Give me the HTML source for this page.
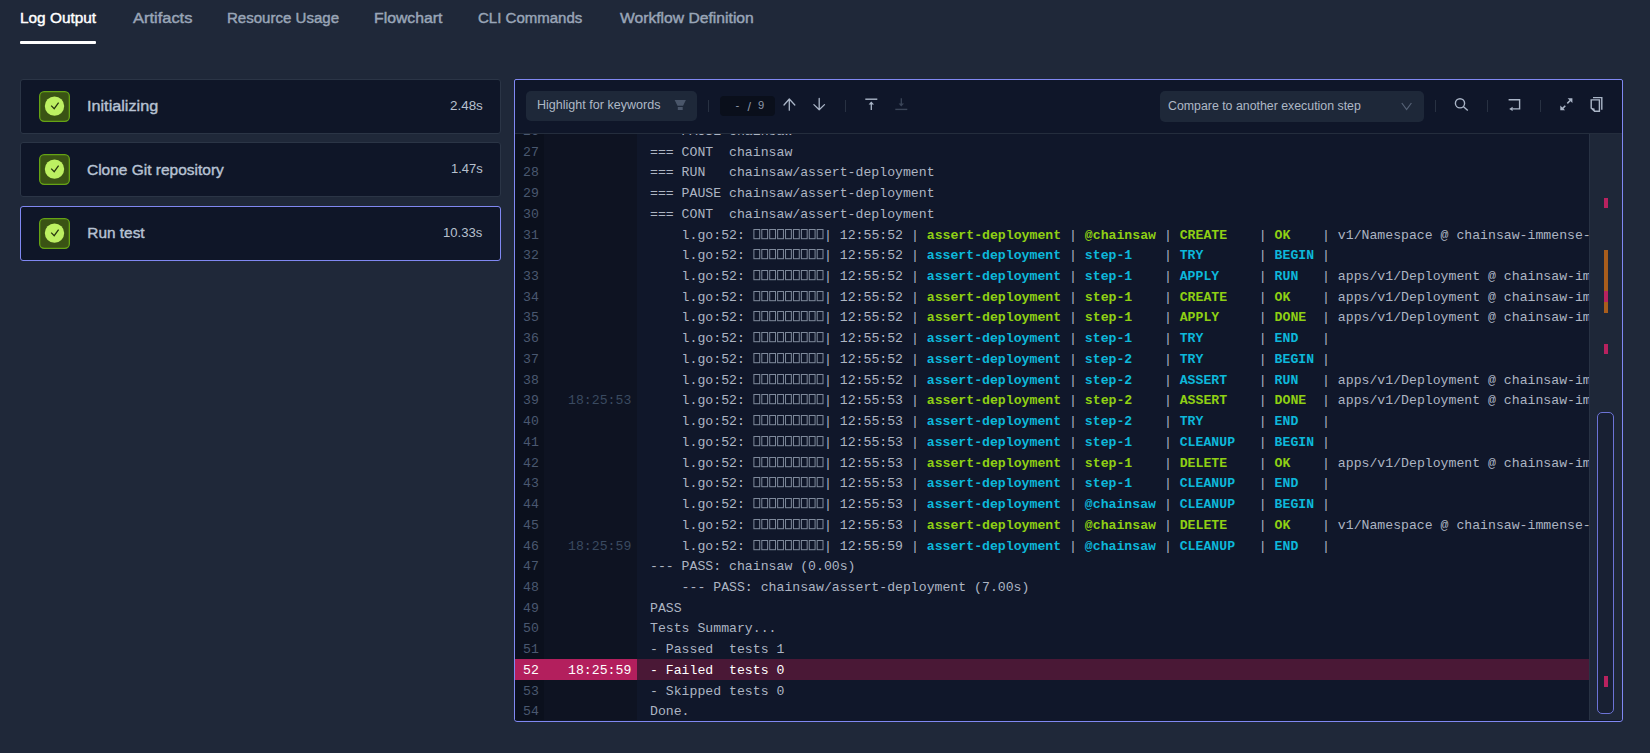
<!DOCTYPE html><html><head><meta charset="utf-8"><style>
*{box-sizing:border-box}
html,body{margin:0;padding:0}
body{width:1650px;height:753px;background:#1f2839;position:relative;overflow:hidden;font-family:"Liberation Sans",sans-serif}
.abs{position:absolute}
.card{position:absolute;left:20px;width:481px;height:55px;background:#0f1628;border:1px solid #2b3546;border-radius:3px}
.card.sel{border-color:#8088f2}
.card svg{position:absolute;left:18px;top:11px}
.panel{position:absolute;left:514px;top:79px;width:1109px;height:643px;border:1px solid #8088f2;border-radius:2px 2px 3px 3px;background:#0f1629;overflow:hidden}
.rows{position:absolute;left:515px;top:134px;width:1074px;height:586px;overflow:hidden;background:#10172a}
.colln{position:absolute;left:0;top:0;width:29px;height:100%;background:#0b101d}
.colts{position:absolute;left:29px;top:0;width:93px;height:100%;background:#0e1322}
.ln{position:absolute;left:0;width:23.9px;text-align:right;font-family:"Liberation Mono",monospace;font-size:13.185px;line-height:15px;color:#4a5870}
.ts{position:absolute;left:29px;width:87.3px;text-align:right;font-family:"Liberation Mono",monospace;font-size:13.185px;line-height:15px;color:#3a4a60}
.tx{position:absolute;left:135px;font-family:"Liberation Mono",monospace;font-size:13.185px;line-height:15px;color:#adb5c3;white-space:pre}
.g{color:#8fd014;font-weight:bold}
.c{color:#0db8da;font-weight:bold}
.tofu{display:inline-block;width:71.208px;height:10px;vertical-align:-1px;position:relative}
.hl .ln,.hl .ts,.hl .tx,.ln.hl,.ts.hl,.tx.hl{color:#ffffff}
.strip{position:absolute;left:1589px;top:134px;width:33px;height:586px;background:#1e2738;border-left:1px solid #283244}
</style></head><body>
<div class="abs" style="left:20px;top:41px;width:76px;height:3px;background:#ffffff;border-radius:1px"></div>
<div class="card" style="top:79px"><svg width="33" height="33" viewBox="0 0 33 33"><rect x="0.65" y="0.65" width="29.7" height="29.7" rx="4.5" fill="#3a5314" stroke="#65a314" stroke-width="1.3"/><circle cx="15.5" cy="15.1" r="9.7" fill="#bdf062"/><path d="M12.2 14.6 L15.2 17.7 L19.6 11.7" fill="none" stroke="#28360f" stroke-width="1.25"/></svg></div>
<div class="card" style="top:142px"><svg width="33" height="33" viewBox="0 0 33 33"><rect x="0.65" y="0.65" width="29.7" height="29.7" rx="4.5" fill="#3a5314" stroke="#65a314" stroke-width="1.3"/><circle cx="15.5" cy="15.1" r="9.7" fill="#bdf062"/><path d="M12.2 14.6 L15.2 17.7 L19.6 11.7" fill="none" stroke="#28360f" stroke-width="1.25"/></svg></div>
<div class="card sel" style="top:206px"><svg width="33" height="33" viewBox="0 0 33 33"><rect x="0.65" y="0.65" width="29.7" height="29.7" rx="4.5" fill="#3a5314" stroke="#65a314" stroke-width="1.3"/><circle cx="15.5" cy="15.1" r="9.7" fill="#bdf062"/><path d="M12.2 14.6 L15.2 17.7 L19.6 11.7" fill="none" stroke="#28360f" stroke-width="1.25"/></svg></div>
<div class="panel"></div>
<div class="abs" style="left:515px;top:133px;width:1107px;height:1px;background:#242d3d"></div>
<div class="abs" style="left:526px;top:91px;width:171px;height:30px;background:#1e2839;border-radius:5px"></div>
<div class="abs" style="left:1160px;top:91px;width:264px;height:31px;background:#1e2839;border-radius:5px"></div>
<div class="abs" style="left:720px;top:96px;width:55px;height:19.5px;background:#0a0f1b;border-radius:4px"></div>
<div class="abs" style="left:708.2px;top:100px;width:1px;height:12px;background:#283142"></div>
<div class="abs" style="left:845.1px;top:100px;width:1px;height:12px;background:#283142"></div>
<div class="abs" style="left:1435.2px;top:100px;width:1px;height:12px;background:#283142"></div>
<div class="abs" style="left:1487.1px;top:100px;width:1px;height:12px;background:#283142"></div>
<div class="abs" style="left:1540.0px;top:100px;width:1px;height:12px;background:#283142"></div>
<svg class="abs" style="left:0;top:0" width="1650" height="140" viewBox="0 0 1650 140"><path d="M674.6 100.1 H685.9 L683.1 105.8 H677.5 Z M677.8 107 H682.7 V110 H677.8 Z" fill="#4a566a"/><g fill="none" stroke="#aab5c7" stroke-width="1.3" stroke-linecap="round" stroke-linejoin="round"><path d="M789.3 99.2 V110.2 M784 105 L789.3 99 L794.8 105"/><path d="M819.2 98.5 V109.8 M813.9 104.6 L819.2 109.8 L824.5 104.6"/></g><path d="M865.3 99.2 H877.3" stroke="#aab5c7" stroke-width="1.4"/><path d="M871.3 110 V102.5" stroke="#aab5c7" stroke-width="1.3"/><path d="M868.6 104.6 L871.3 101.6 L874 104.6 Z" fill="#aab5c7"/><path d="M895.3 109.4 H907.3" stroke="#3b4558" stroke-width="1.4"/><path d="M901.3 98.2 V105.5" stroke="#3b4558" stroke-width="1.3"/><path d="M898.6 103.6 L901.3 106.6 L904 103.6 Z" fill="#3b4558"/><path d="M1401.8 103 L1406.6 109.6 L1411.4 103" fill="none" stroke="#566276" stroke-width="1.2"/><g fill="none" stroke="#aab5c7" stroke-width="1.4"><circle cx="1460" cy="103.3" r="4.6"/><path d="M1463.3 106.6 L1467.8 110.6"/></g><path d="M1508.6 99.8 H1519.6 V108.9 H1512.3" fill="none" stroke="#aab5c7" stroke-width="1.4"/><path d="M1509.2 108.9 L1512.6 106.7 V111.1 Z" fill="#aab5c7"/><path d="M1565.3 105.8 L1562.5 108.6 M1567.3 103.4 L1570.2 100.5" stroke="#aab5c7" stroke-width="1.5"/><path d="M1567.6 98.3 H1572.4 V103.1 Z M1560.3 105.4 V110.2 H1565.1 Z" fill="#aab5c7"/><g fill="none" stroke="#aab5c7" stroke-width="1.4"><path d="M1593 97.6 H1601.8 V109.7"/><path d="M1591.2 108 V99.9 H1599.4 V111.2 H1594.6 Z"/></g><path d="M1590.5 108 L1594.5 108.4 L1594.8 111.9 Z" fill="#aab5c7"/></svg>
<div class="rows"><div class="colln"></div><div class="colts"></div>
<div class="abs" style="left:0;top:525px;width:1074px;height:21px;background:#4a1836"></div>
<div class="abs" style="left:0;top:525px;width:122px;height:21px;background:#b31f5d"></div>
<span class="ln" style="top:-10px">26</span>
<span class="tx" style="top:-10px">=== PAUSE chainsaw</span>
<span class="ln" style="top:11px">27</span>
<span class="tx" style="top:11px">=== CONT  chainsaw</span>
<span class="ln" style="top:31px">28</span>
<span class="tx" style="top:31px">=== RUN   chainsaw/assert-deployment</span>
<span class="ln" style="top:52px">29</span>
<span class="tx" style="top:52px">=== PAUSE chainsaw/assert-deployment</span>
<span class="ln" style="top:73px">30</span>
<span class="tx" style="top:73px">=== CONT  chainsaw/assert-deployment</span>
<span class="ln" style="top:94px">31</span>
<span class="tx" style="top:94px">    l.go:52: <span class="tofu"><svg width="72" height="11" style="position:absolute;left:0;top:-1px"><rect x="0.90" y="0.5" width="5.8" height="9.2" fill="none" stroke="#7f8a9c" stroke-width="1"/><rect x="8.81" y="0.5" width="5.8" height="9.2" fill="none" stroke="#7f8a9c" stroke-width="1"/><rect x="16.72" y="0.5" width="5.8" height="9.2" fill="none" stroke="#7f8a9c" stroke-width="1"/><rect x="24.64" y="0.5" width="5.8" height="9.2" fill="none" stroke="#7f8a9c" stroke-width="1"/><rect x="32.55" y="0.5" width="5.8" height="9.2" fill="none" stroke="#7f8a9c" stroke-width="1"/><rect x="40.46" y="0.5" width="5.8" height="9.2" fill="none" stroke="#7f8a9c" stroke-width="1"/><rect x="48.37" y="0.5" width="5.8" height="9.2" fill="none" stroke="#7f8a9c" stroke-width="1"/><rect x="56.28" y="0.5" width="5.8" height="9.2" fill="none" stroke="#7f8a9c" stroke-width="1"/><rect x="64.20" y="0.5" width="5.8" height="9.2" fill="none" stroke="#7f8a9c" stroke-width="1"/></svg></span>| 12:55:52 | <span class="g">assert-deployment</span> | <span class="g">@chainsaw</span> | <span class="g">CREATE</span>    | <span class="g">OK</span>    | v1/Namespace @ chainsaw-immense-goblin</span>
<span class="ln" style="top:114px">32</span>
<span class="tx" style="top:114px">    l.go:52: <span class="tofu"><svg width="72" height="11" style="position:absolute;left:0;top:-1px"><rect x="0.90" y="0.5" width="5.8" height="9.2" fill="none" stroke="#7f8a9c" stroke-width="1"/><rect x="8.81" y="0.5" width="5.8" height="9.2" fill="none" stroke="#7f8a9c" stroke-width="1"/><rect x="16.72" y="0.5" width="5.8" height="9.2" fill="none" stroke="#7f8a9c" stroke-width="1"/><rect x="24.64" y="0.5" width="5.8" height="9.2" fill="none" stroke="#7f8a9c" stroke-width="1"/><rect x="32.55" y="0.5" width="5.8" height="9.2" fill="none" stroke="#7f8a9c" stroke-width="1"/><rect x="40.46" y="0.5" width="5.8" height="9.2" fill="none" stroke="#7f8a9c" stroke-width="1"/><rect x="48.37" y="0.5" width="5.8" height="9.2" fill="none" stroke="#7f8a9c" stroke-width="1"/><rect x="56.28" y="0.5" width="5.8" height="9.2" fill="none" stroke="#7f8a9c" stroke-width="1"/><rect x="64.20" y="0.5" width="5.8" height="9.2" fill="none" stroke="#7f8a9c" stroke-width="1"/></svg></span>| 12:55:52 | <span class="c">assert-deployment</span> | <span class="c">step-1</span>    | <span class="c">TRY</span>       | <span class="c">BEGIN</span> |</span>
<span class="ln" style="top:135px">33</span>
<span class="tx" style="top:135px">    l.go:52: <span class="tofu"><svg width="72" height="11" style="position:absolute;left:0;top:-1px"><rect x="0.90" y="0.5" width="5.8" height="9.2" fill="none" stroke="#7f8a9c" stroke-width="1"/><rect x="8.81" y="0.5" width="5.8" height="9.2" fill="none" stroke="#7f8a9c" stroke-width="1"/><rect x="16.72" y="0.5" width="5.8" height="9.2" fill="none" stroke="#7f8a9c" stroke-width="1"/><rect x="24.64" y="0.5" width="5.8" height="9.2" fill="none" stroke="#7f8a9c" stroke-width="1"/><rect x="32.55" y="0.5" width="5.8" height="9.2" fill="none" stroke="#7f8a9c" stroke-width="1"/><rect x="40.46" y="0.5" width="5.8" height="9.2" fill="none" stroke="#7f8a9c" stroke-width="1"/><rect x="48.37" y="0.5" width="5.8" height="9.2" fill="none" stroke="#7f8a9c" stroke-width="1"/><rect x="56.28" y="0.5" width="5.8" height="9.2" fill="none" stroke="#7f8a9c" stroke-width="1"/><rect x="64.20" y="0.5" width="5.8" height="9.2" fill="none" stroke="#7f8a9c" stroke-width="1"/></svg></span>| 12:55:52 | <span class="c">assert-deployment</span> | <span class="c">step-1</span>    | <span class="c">APPLY</span>     | <span class="c">RUN</span>   | apps/v1/Deployment @ chainsaw-immense-goblin/coredns</span>
<span class="ln" style="top:156px">34</span>
<span class="tx" style="top:156px">    l.go:52: <span class="tofu"><svg width="72" height="11" style="position:absolute;left:0;top:-1px"><rect x="0.90" y="0.5" width="5.8" height="9.2" fill="none" stroke="#7f8a9c" stroke-width="1"/><rect x="8.81" y="0.5" width="5.8" height="9.2" fill="none" stroke="#7f8a9c" stroke-width="1"/><rect x="16.72" y="0.5" width="5.8" height="9.2" fill="none" stroke="#7f8a9c" stroke-width="1"/><rect x="24.64" y="0.5" width="5.8" height="9.2" fill="none" stroke="#7f8a9c" stroke-width="1"/><rect x="32.55" y="0.5" width="5.8" height="9.2" fill="none" stroke="#7f8a9c" stroke-width="1"/><rect x="40.46" y="0.5" width="5.8" height="9.2" fill="none" stroke="#7f8a9c" stroke-width="1"/><rect x="48.37" y="0.5" width="5.8" height="9.2" fill="none" stroke="#7f8a9c" stroke-width="1"/><rect x="56.28" y="0.5" width="5.8" height="9.2" fill="none" stroke="#7f8a9c" stroke-width="1"/><rect x="64.20" y="0.5" width="5.8" height="9.2" fill="none" stroke="#7f8a9c" stroke-width="1"/></svg></span>| 12:55:52 | <span class="g">assert-deployment</span> | <span class="g">step-1</span>    | <span class="g">CREATE</span>    | <span class="g">OK</span>    | apps/v1/Deployment @ chainsaw-immense-goblin/coredns</span>
<span class="ln" style="top:176px">35</span>
<span class="tx" style="top:176px">    l.go:52: <span class="tofu"><svg width="72" height="11" style="position:absolute;left:0;top:-1px"><rect x="0.90" y="0.5" width="5.8" height="9.2" fill="none" stroke="#7f8a9c" stroke-width="1"/><rect x="8.81" y="0.5" width="5.8" height="9.2" fill="none" stroke="#7f8a9c" stroke-width="1"/><rect x="16.72" y="0.5" width="5.8" height="9.2" fill="none" stroke="#7f8a9c" stroke-width="1"/><rect x="24.64" y="0.5" width="5.8" height="9.2" fill="none" stroke="#7f8a9c" stroke-width="1"/><rect x="32.55" y="0.5" width="5.8" height="9.2" fill="none" stroke="#7f8a9c" stroke-width="1"/><rect x="40.46" y="0.5" width="5.8" height="9.2" fill="none" stroke="#7f8a9c" stroke-width="1"/><rect x="48.37" y="0.5" width="5.8" height="9.2" fill="none" stroke="#7f8a9c" stroke-width="1"/><rect x="56.28" y="0.5" width="5.8" height="9.2" fill="none" stroke="#7f8a9c" stroke-width="1"/><rect x="64.20" y="0.5" width="5.8" height="9.2" fill="none" stroke="#7f8a9c" stroke-width="1"/></svg></span>| 12:55:52 | <span class="g">assert-deployment</span> | <span class="g">step-1</span>    | <span class="g">APPLY</span>     | <span class="g">DONE</span>  | apps/v1/Deployment @ chainsaw-immense-goblin/coredns</span>
<span class="ln" style="top:197px">36</span>
<span class="tx" style="top:197px">    l.go:52: <span class="tofu"><svg width="72" height="11" style="position:absolute;left:0;top:-1px"><rect x="0.90" y="0.5" width="5.8" height="9.2" fill="none" stroke="#7f8a9c" stroke-width="1"/><rect x="8.81" y="0.5" width="5.8" height="9.2" fill="none" stroke="#7f8a9c" stroke-width="1"/><rect x="16.72" y="0.5" width="5.8" height="9.2" fill="none" stroke="#7f8a9c" stroke-width="1"/><rect x="24.64" y="0.5" width="5.8" height="9.2" fill="none" stroke="#7f8a9c" stroke-width="1"/><rect x="32.55" y="0.5" width="5.8" height="9.2" fill="none" stroke="#7f8a9c" stroke-width="1"/><rect x="40.46" y="0.5" width="5.8" height="9.2" fill="none" stroke="#7f8a9c" stroke-width="1"/><rect x="48.37" y="0.5" width="5.8" height="9.2" fill="none" stroke="#7f8a9c" stroke-width="1"/><rect x="56.28" y="0.5" width="5.8" height="9.2" fill="none" stroke="#7f8a9c" stroke-width="1"/><rect x="64.20" y="0.5" width="5.8" height="9.2" fill="none" stroke="#7f8a9c" stroke-width="1"/></svg></span>| 12:55:52 | <span class="c">assert-deployment</span> | <span class="c">step-1</span>    | <span class="c">TRY</span>       | <span class="c">END</span>   |</span>
<span class="ln" style="top:218px">37</span>
<span class="tx" style="top:218px">    l.go:52: <span class="tofu"><svg width="72" height="11" style="position:absolute;left:0;top:-1px"><rect x="0.90" y="0.5" width="5.8" height="9.2" fill="none" stroke="#7f8a9c" stroke-width="1"/><rect x="8.81" y="0.5" width="5.8" height="9.2" fill="none" stroke="#7f8a9c" stroke-width="1"/><rect x="16.72" y="0.5" width="5.8" height="9.2" fill="none" stroke="#7f8a9c" stroke-width="1"/><rect x="24.64" y="0.5" width="5.8" height="9.2" fill="none" stroke="#7f8a9c" stroke-width="1"/><rect x="32.55" y="0.5" width="5.8" height="9.2" fill="none" stroke="#7f8a9c" stroke-width="1"/><rect x="40.46" y="0.5" width="5.8" height="9.2" fill="none" stroke="#7f8a9c" stroke-width="1"/><rect x="48.37" y="0.5" width="5.8" height="9.2" fill="none" stroke="#7f8a9c" stroke-width="1"/><rect x="56.28" y="0.5" width="5.8" height="9.2" fill="none" stroke="#7f8a9c" stroke-width="1"/><rect x="64.20" y="0.5" width="5.8" height="9.2" fill="none" stroke="#7f8a9c" stroke-width="1"/></svg></span>| 12:55:52 | <span class="c">assert-deployment</span> | <span class="c">step-2</span>    | <span class="c">TRY</span>       | <span class="c">BEGIN</span> |</span>
<span class="ln" style="top:239px">38</span>
<span class="tx" style="top:239px">    l.go:52: <span class="tofu"><svg width="72" height="11" style="position:absolute;left:0;top:-1px"><rect x="0.90" y="0.5" width="5.8" height="9.2" fill="none" stroke="#7f8a9c" stroke-width="1"/><rect x="8.81" y="0.5" width="5.8" height="9.2" fill="none" stroke="#7f8a9c" stroke-width="1"/><rect x="16.72" y="0.5" width="5.8" height="9.2" fill="none" stroke="#7f8a9c" stroke-width="1"/><rect x="24.64" y="0.5" width="5.8" height="9.2" fill="none" stroke="#7f8a9c" stroke-width="1"/><rect x="32.55" y="0.5" width="5.8" height="9.2" fill="none" stroke="#7f8a9c" stroke-width="1"/><rect x="40.46" y="0.5" width="5.8" height="9.2" fill="none" stroke="#7f8a9c" stroke-width="1"/><rect x="48.37" y="0.5" width="5.8" height="9.2" fill="none" stroke="#7f8a9c" stroke-width="1"/><rect x="56.28" y="0.5" width="5.8" height="9.2" fill="none" stroke="#7f8a9c" stroke-width="1"/><rect x="64.20" y="0.5" width="5.8" height="9.2" fill="none" stroke="#7f8a9c" stroke-width="1"/></svg></span>| 12:55:52 | <span class="c">assert-deployment</span> | <span class="c">step-2</span>    | <span class="c">ASSERT</span>    | <span class="c">RUN</span>   | apps/v1/Deployment @ chainsaw-immense-goblin/coredns</span>
<span class="ln" style="top:259px">39</span>
<span class="ts" style="top:259px">18:25:53</span>
<span class="tx" style="top:259px">    l.go:52: <span class="tofu"><svg width="72" height="11" style="position:absolute;left:0;top:-1px"><rect x="0.90" y="0.5" width="5.8" height="9.2" fill="none" stroke="#7f8a9c" stroke-width="1"/><rect x="8.81" y="0.5" width="5.8" height="9.2" fill="none" stroke="#7f8a9c" stroke-width="1"/><rect x="16.72" y="0.5" width="5.8" height="9.2" fill="none" stroke="#7f8a9c" stroke-width="1"/><rect x="24.64" y="0.5" width="5.8" height="9.2" fill="none" stroke="#7f8a9c" stroke-width="1"/><rect x="32.55" y="0.5" width="5.8" height="9.2" fill="none" stroke="#7f8a9c" stroke-width="1"/><rect x="40.46" y="0.5" width="5.8" height="9.2" fill="none" stroke="#7f8a9c" stroke-width="1"/><rect x="48.37" y="0.5" width="5.8" height="9.2" fill="none" stroke="#7f8a9c" stroke-width="1"/><rect x="56.28" y="0.5" width="5.8" height="9.2" fill="none" stroke="#7f8a9c" stroke-width="1"/><rect x="64.20" y="0.5" width="5.8" height="9.2" fill="none" stroke="#7f8a9c" stroke-width="1"/></svg></span>| 12:55:53 | <span class="g">assert-deployment</span> | <span class="g">step-2</span>    | <span class="g">ASSERT</span>    | <span class="g">DONE</span>  | apps/v1/Deployment @ chainsaw-immense-goblin/coredns</span>
<span class="ln" style="top:280px">40</span>
<span class="tx" style="top:280px">    l.go:52: <span class="tofu"><svg width="72" height="11" style="position:absolute;left:0;top:-1px"><rect x="0.90" y="0.5" width="5.8" height="9.2" fill="none" stroke="#7f8a9c" stroke-width="1"/><rect x="8.81" y="0.5" width="5.8" height="9.2" fill="none" stroke="#7f8a9c" stroke-width="1"/><rect x="16.72" y="0.5" width="5.8" height="9.2" fill="none" stroke="#7f8a9c" stroke-width="1"/><rect x="24.64" y="0.5" width="5.8" height="9.2" fill="none" stroke="#7f8a9c" stroke-width="1"/><rect x="32.55" y="0.5" width="5.8" height="9.2" fill="none" stroke="#7f8a9c" stroke-width="1"/><rect x="40.46" y="0.5" width="5.8" height="9.2" fill="none" stroke="#7f8a9c" stroke-width="1"/><rect x="48.37" y="0.5" width="5.8" height="9.2" fill="none" stroke="#7f8a9c" stroke-width="1"/><rect x="56.28" y="0.5" width="5.8" height="9.2" fill="none" stroke="#7f8a9c" stroke-width="1"/><rect x="64.20" y="0.5" width="5.8" height="9.2" fill="none" stroke="#7f8a9c" stroke-width="1"/></svg></span>| 12:55:53 | <span class="c">assert-deployment</span> | <span class="c">step-2</span>    | <span class="c">TRY</span>       | <span class="c">END</span>   |</span>
<span class="ln" style="top:301px">41</span>
<span class="tx" style="top:301px">    l.go:52: <span class="tofu"><svg width="72" height="11" style="position:absolute;left:0;top:-1px"><rect x="0.90" y="0.5" width="5.8" height="9.2" fill="none" stroke="#7f8a9c" stroke-width="1"/><rect x="8.81" y="0.5" width="5.8" height="9.2" fill="none" stroke="#7f8a9c" stroke-width="1"/><rect x="16.72" y="0.5" width="5.8" height="9.2" fill="none" stroke="#7f8a9c" stroke-width="1"/><rect x="24.64" y="0.5" width="5.8" height="9.2" fill="none" stroke="#7f8a9c" stroke-width="1"/><rect x="32.55" y="0.5" width="5.8" height="9.2" fill="none" stroke="#7f8a9c" stroke-width="1"/><rect x="40.46" y="0.5" width="5.8" height="9.2" fill="none" stroke="#7f8a9c" stroke-width="1"/><rect x="48.37" y="0.5" width="5.8" height="9.2" fill="none" stroke="#7f8a9c" stroke-width="1"/><rect x="56.28" y="0.5" width="5.8" height="9.2" fill="none" stroke="#7f8a9c" stroke-width="1"/><rect x="64.20" y="0.5" width="5.8" height="9.2" fill="none" stroke="#7f8a9c" stroke-width="1"/></svg></span>| 12:55:53 | <span class="c">assert-deployment</span> | <span class="c">step-1</span>    | <span class="c">CLEANUP</span>   | <span class="c">BEGIN</span> |</span>
<span class="ln" style="top:322px">42</span>
<span class="tx" style="top:322px">    l.go:52: <span class="tofu"><svg width="72" height="11" style="position:absolute;left:0;top:-1px"><rect x="0.90" y="0.5" width="5.8" height="9.2" fill="none" stroke="#7f8a9c" stroke-width="1"/><rect x="8.81" y="0.5" width="5.8" height="9.2" fill="none" stroke="#7f8a9c" stroke-width="1"/><rect x="16.72" y="0.5" width="5.8" height="9.2" fill="none" stroke="#7f8a9c" stroke-width="1"/><rect x="24.64" y="0.5" width="5.8" height="9.2" fill="none" stroke="#7f8a9c" stroke-width="1"/><rect x="32.55" y="0.5" width="5.8" height="9.2" fill="none" stroke="#7f8a9c" stroke-width="1"/><rect x="40.46" y="0.5" width="5.8" height="9.2" fill="none" stroke="#7f8a9c" stroke-width="1"/><rect x="48.37" y="0.5" width="5.8" height="9.2" fill="none" stroke="#7f8a9c" stroke-width="1"/><rect x="56.28" y="0.5" width="5.8" height="9.2" fill="none" stroke="#7f8a9c" stroke-width="1"/><rect x="64.20" y="0.5" width="5.8" height="9.2" fill="none" stroke="#7f8a9c" stroke-width="1"/></svg></span>| 12:55:53 | <span class="g">assert-deployment</span> | <span class="g">step-1</span>    | <span class="g">DELETE</span>    | <span class="g">OK</span>    | apps/v1/Deployment @ chainsaw-immense-goblin/coredns</span>
<span class="ln" style="top:342px">43</span>
<span class="tx" style="top:342px">    l.go:52: <span class="tofu"><svg width="72" height="11" style="position:absolute;left:0;top:-1px"><rect x="0.90" y="0.5" width="5.8" height="9.2" fill="none" stroke="#7f8a9c" stroke-width="1"/><rect x="8.81" y="0.5" width="5.8" height="9.2" fill="none" stroke="#7f8a9c" stroke-width="1"/><rect x="16.72" y="0.5" width="5.8" height="9.2" fill="none" stroke="#7f8a9c" stroke-width="1"/><rect x="24.64" y="0.5" width="5.8" height="9.2" fill="none" stroke="#7f8a9c" stroke-width="1"/><rect x="32.55" y="0.5" width="5.8" height="9.2" fill="none" stroke="#7f8a9c" stroke-width="1"/><rect x="40.46" y="0.5" width="5.8" height="9.2" fill="none" stroke="#7f8a9c" stroke-width="1"/><rect x="48.37" y="0.5" width="5.8" height="9.2" fill="none" stroke="#7f8a9c" stroke-width="1"/><rect x="56.28" y="0.5" width="5.8" height="9.2" fill="none" stroke="#7f8a9c" stroke-width="1"/><rect x="64.20" y="0.5" width="5.8" height="9.2" fill="none" stroke="#7f8a9c" stroke-width="1"/></svg></span>| 12:55:53 | <span class="c">assert-deployment</span> | <span class="c">step-1</span>    | <span class="c">CLEANUP</span>   | <span class="c">END</span>   |</span>
<span class="ln" style="top:363px">44</span>
<span class="tx" style="top:363px">    l.go:52: <span class="tofu"><svg width="72" height="11" style="position:absolute;left:0;top:-1px"><rect x="0.90" y="0.5" width="5.8" height="9.2" fill="none" stroke="#7f8a9c" stroke-width="1"/><rect x="8.81" y="0.5" width="5.8" height="9.2" fill="none" stroke="#7f8a9c" stroke-width="1"/><rect x="16.72" y="0.5" width="5.8" height="9.2" fill="none" stroke="#7f8a9c" stroke-width="1"/><rect x="24.64" y="0.5" width="5.8" height="9.2" fill="none" stroke="#7f8a9c" stroke-width="1"/><rect x="32.55" y="0.5" width="5.8" height="9.2" fill="none" stroke="#7f8a9c" stroke-width="1"/><rect x="40.46" y="0.5" width="5.8" height="9.2" fill="none" stroke="#7f8a9c" stroke-width="1"/><rect x="48.37" y="0.5" width="5.8" height="9.2" fill="none" stroke="#7f8a9c" stroke-width="1"/><rect x="56.28" y="0.5" width="5.8" height="9.2" fill="none" stroke="#7f8a9c" stroke-width="1"/><rect x="64.20" y="0.5" width="5.8" height="9.2" fill="none" stroke="#7f8a9c" stroke-width="1"/></svg></span>| 12:55:53 | <span class="c">assert-deployment</span> | <span class="c">@chainsaw</span> | <span class="c">CLEANUP</span>   | <span class="c">BEGIN</span> |</span>
<span class="ln" style="top:384px">45</span>
<span class="tx" style="top:384px">    l.go:52: <span class="tofu"><svg width="72" height="11" style="position:absolute;left:0;top:-1px"><rect x="0.90" y="0.5" width="5.8" height="9.2" fill="none" stroke="#7f8a9c" stroke-width="1"/><rect x="8.81" y="0.5" width="5.8" height="9.2" fill="none" stroke="#7f8a9c" stroke-width="1"/><rect x="16.72" y="0.5" width="5.8" height="9.2" fill="none" stroke="#7f8a9c" stroke-width="1"/><rect x="24.64" y="0.5" width="5.8" height="9.2" fill="none" stroke="#7f8a9c" stroke-width="1"/><rect x="32.55" y="0.5" width="5.8" height="9.2" fill="none" stroke="#7f8a9c" stroke-width="1"/><rect x="40.46" y="0.5" width="5.8" height="9.2" fill="none" stroke="#7f8a9c" stroke-width="1"/><rect x="48.37" y="0.5" width="5.8" height="9.2" fill="none" stroke="#7f8a9c" stroke-width="1"/><rect x="56.28" y="0.5" width="5.8" height="9.2" fill="none" stroke="#7f8a9c" stroke-width="1"/><rect x="64.20" y="0.5" width="5.8" height="9.2" fill="none" stroke="#7f8a9c" stroke-width="1"/></svg></span>| 12:55:53 | <span class="g">assert-deployment</span> | <span class="g">@chainsaw</span> | <span class="g">DELETE</span>    | <span class="g">OK</span>    | v1/Namespace @ chainsaw-immense-goblin</span>
<span class="ln" style="top:405px">46</span>
<span class="ts" style="top:405px">18:25:59</span>
<span class="tx" style="top:405px">    l.go:52: <span class="tofu"><svg width="72" height="11" style="position:absolute;left:0;top:-1px"><rect x="0.90" y="0.5" width="5.8" height="9.2" fill="none" stroke="#7f8a9c" stroke-width="1"/><rect x="8.81" y="0.5" width="5.8" height="9.2" fill="none" stroke="#7f8a9c" stroke-width="1"/><rect x="16.72" y="0.5" width="5.8" height="9.2" fill="none" stroke="#7f8a9c" stroke-width="1"/><rect x="24.64" y="0.5" width="5.8" height="9.2" fill="none" stroke="#7f8a9c" stroke-width="1"/><rect x="32.55" y="0.5" width="5.8" height="9.2" fill="none" stroke="#7f8a9c" stroke-width="1"/><rect x="40.46" y="0.5" width="5.8" height="9.2" fill="none" stroke="#7f8a9c" stroke-width="1"/><rect x="48.37" y="0.5" width="5.8" height="9.2" fill="none" stroke="#7f8a9c" stroke-width="1"/><rect x="56.28" y="0.5" width="5.8" height="9.2" fill="none" stroke="#7f8a9c" stroke-width="1"/><rect x="64.20" y="0.5" width="5.8" height="9.2" fill="none" stroke="#7f8a9c" stroke-width="1"/></svg></span>| 12:55:59 | <span class="c">assert-deployment</span> | <span class="c">@chainsaw</span> | <span class="c">CLEANUP</span>   | <span class="c">END</span>   |</span>
<span class="ln" style="top:425px">47</span>
<span class="tx" style="top:425px">--- PASS: chainsaw (0.00s)</span>
<span class="ln" style="top:446px">48</span>
<span class="tx" style="top:446px">    --- PASS: chainsaw/assert-deployment (7.00s)</span>
<span class="ln" style="top:467px">49</span>
<span class="tx" style="top:467px">PASS</span>
<span class="ln" style="top:487px">50</span>
<span class="tx" style="top:487px">Tests Summary...</span>
<span class="ln" style="top:508px">51</span>
<span class="tx" style="top:508px">- Passed  tests 1</span>
<span class="ln hl" style="top:529px">52</span>
<span class="ts hl" style="top:529px">18:25:59</span>
<span class="tx hl" style="top:529px">- Failed  tests 0</span>
<span class="ln" style="top:550px">53</span>
<span class="tx" style="top:550px">- Skipped tests 0</span>
<span class="ln" style="top:570px">54</span>
<span class="tx" style="top:570px">Done.</span>
</div>
<div class="strip"></div>
<div class="abs" style="left:1597.2px;top:412px;width:17.3px;height:302px;border:1.3px solid #6c73d6;border-radius:5px;background:#182033"></div>
<div class="abs" style="left:1603.8px;top:197.7px;width:4.4px;height:10.8px;background:#b8225f"></div>
<div class="abs" style="left:1603.8px;top:249.9px;width:4.4px;height:63.1px;background:#a95d1c"></div>
<div class="abs" style="left:1603.8px;top:291.3px;width:4.4px;height:10.6px;background:#b8225f"></div>
<div class="abs" style="left:1603.8px;top:343.6px;width:4.4px;height:10.2px;background:#b8225f"></div>
<div class="abs" style="left:1603.8px;top:676px;width:4.4px;height:11.0px;background:#b8225f"></div>
<div style="position:absolute;left:19.90px;top:8.80px;font-family:'Liberation Sans';font-size:15.5px;line-height:17px;font-weight:normal;color:#ffffff;white-space:pre;transform:scaleX(0.9922);transform-origin:0 0;-webkit-text-stroke:0.45px #ffffff;">Log Output</div>
<div style="position:absolute;left:132.60px;top:8.80px;font-family:'Liberation Sans';font-size:15.5px;line-height:17px;font-weight:normal;color:#99a5b7;white-space:pre;transform:scaleX(1.0610);transform-origin:0 0;-webkit-text-stroke:0.45px #99a5b7;">Artifacts</div>
<div style="position:absolute;left:227.20px;top:8.80px;font-family:'Liberation Sans';font-size:15.5px;line-height:17px;font-weight:normal;color:#99a5b7;white-space:pre;transform:scaleX(0.9701);transform-origin:0 0;-webkit-text-stroke:0.45px #99a5b7;">Resource Usage</div>
<div style="position:absolute;left:374.20px;top:8.80px;font-family:'Liberation Sans';font-size:15.5px;line-height:17px;font-weight:normal;color:#99a5b7;white-space:pre;transform:scaleX(1.0181);transform-origin:0 0;-webkit-text-stroke:0.45px #99a5b7;">Flowchart</div>
<div style="position:absolute;left:478.00px;top:8.80px;font-family:'Liberation Sans';font-size:15.5px;line-height:17px;font-weight:normal;color:#99a5b7;white-space:pre;transform:scaleX(0.9687);transform-origin:0 0;-webkit-text-stroke:0.45px #99a5b7;">CLI Commands</div>
<div style="position:absolute;left:619.50px;top:8.80px;font-family:'Liberation Sans';font-size:15.5px;line-height:17px;font-weight:normal;color:#99a5b7;white-space:pre;transform:scaleX(1.0108);transform-origin:0 0;-webkit-text-stroke:0.45px #99a5b7;">Workflow Definition</div>
<div style="position:absolute;left:87.00px;top:97.00px;font-family:'Liberation Sans';font-size:15.4px;line-height:17px;font-weight:normal;color:#b7c2d3;white-space:pre;transform:scaleX(1.0535);transform-origin:0 0;-webkit-text-stroke:0.4px #b7c2d3;">Initializing</div>
<div style="position:absolute;left:87.30px;top:161.00px;font-family:'Liberation Sans';font-size:15.4px;line-height:17px;font-weight:normal;color:#b7c2d3;white-space:pre;transform:scaleX(1.0058);transform-origin:0 0;-webkit-text-stroke:0.4px #b7c2d3;">Clone Git repository</div>
<div style="position:absolute;left:87.30px;top:224.00px;font-family:'Liberation Sans';font-size:15.4px;line-height:17px;font-weight:normal;color:#b7c2d3;white-space:pre;-webkit-text-stroke:0.4px #b7c2d3;">Run test</div>
<div style="position:absolute;left:449.80px;top:98.30px;font-family:'Liberation Sans';font-size:12.8px;line-height:15px;font-weight:normal;color:#b7c0ce;white-space:pre;transform:scaleX(1.0478);transform-origin:0 0;">2.48s</div>
<div style="position:absolute;left:450.80px;top:161.30px;font-family:'Liberation Sans';font-size:12.8px;line-height:15px;font-weight:normal;color:#b7c0ce;white-space:pre;transform:scaleX(1.0158);transform-origin:0 0;">1.47s</div>
<div style="position:absolute;left:443.30px;top:225.30px;font-family:'Liberation Sans';font-size:12.8px;line-height:15px;font-weight:normal;color:#b7c0ce;white-space:pre;transform:scaleX(1.0229);transform-origin:0 0;">10.33s</div>
<div style="position:absolute;left:536.60px;top:98.00px;font-family:'Liberation Sans';font-size:12.3px;line-height:14px;font-weight:normal;color:#aeb8c6;white-space:pre;transform:scaleX(1.0201);transform-origin:0 0;">Highlight for keywords</div>
<div style="position:absolute;left:1167.80px;top:99.30px;font-family:'Liberation Sans';font-size:12.3px;line-height:14px;font-weight:normal;color:#aeb8c6;white-space:pre;transform:scaleX(1.0037);transform-origin:0 0;">Compare to another execution step</div>
<div style="position:absolute;left:735.60px;top:99.20px;font-family:'Liberation Sans';font-size:11.5px;line-height:12px;font-weight:normal;color:#8d98aa;white-space:pre;">-</div>
<div style="position:absolute;left:747.60px;top:100.00px;font-family:'Liberation Sans';font-size:12.6px;line-height:14px;font-weight:normal;color:#8d98aa;white-space:pre;">/</div>
<div style="position:absolute;left:758.20px;top:99.20px;font-family:'Liberation Sans';font-size:11.5px;line-height:12px;font-weight:normal;color:#8d98aa;white-space:pre;transform:scaleX(0.9694);transform-origin:0 0;">9</div>
</body></html>
